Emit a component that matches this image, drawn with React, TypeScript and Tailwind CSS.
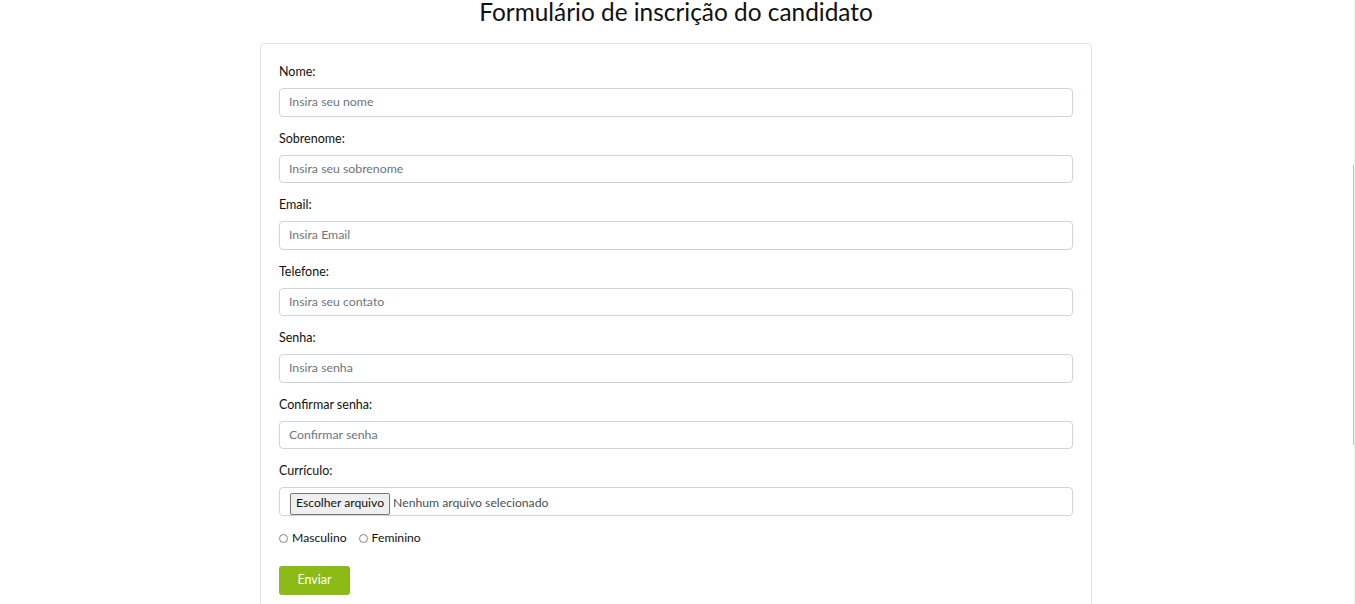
import React from "react";

const fields = [
  { label: "Nome:", ph: "Insira seu nome" },
  { label: "Sobrenome:", ph: "Insira seu sobrenome" },
  { label: "Email:", ph: "Insira Email" },
  { label: "Telefone:", ph: "Insira seu contato" },
  { label: "Senha:", ph: "Insira senha" },
  { label: "Confirmar senha:", ph: "Confirmar senha" },
];

export default function App() {
  return (
    <div
      className="relative w-[1352px] bg-white text-[#212529]"
      style={{ fontFamily: "Lato, 'Noto Sans', sans-serif" }}
    >
      <h1 className="text-center text-[24.4px] leading-[22px] pt-[1px] font-normal text-[#111] mb-[20px]">
        Formulário de inscrição do candidato
      </h1>
      <div className="mx-auto w-[832px] h-[580px] border border-[#e3e3e3] rounded-[4px] p-[18px]">
        {fields.map((f) => (
          <div key={f.label} className="mb-[12px]">
            <div className="text-[12.5px] leading-[19.5px] mb-[6.5px] text-[#111]">{f.label}</div>
            <div className="h-[28.5px] border border-[#ced4da] rounded-[4px] px-[9px] flex items-center text-[12.3px] text-[#6c757d]">
              {f.ph}
            </div>
          </div>
        ))}
        <div className="mb-[12px]">
          <div className="text-[12.5px] leading-[19.5px] mb-[6.5px] text-[#111]">Currículo:</div>
          <div className="h-[29px] border border-[#ced4da] rounded-[4px] px-[10px] flex items-center text-[12.2px] text-[#495057]">
            <span className="h-[22px] px-[5px] flex items-center bg-[#efefef] border border-[#767676] rounded-[2px] text-[#111] mr-[3px] mt-[4px]">
              Escolher arquivo
            </span>
            <span className="mt-[4px]">Nenhum arquivo selecionado</span>
          </div>
        </div>
        <div className="flex items-center text-[12.2px] text-[#111] h-[20px] mt-[10px]">
          <span className="w-[9px] h-[9px] rounded-full border border-[#858585] mr-[4px]" />
          <span className="mr-[12px]">Masculino</span>
          <span className="w-[9px] h-[9px] rounded-full border border-[#858585] mr-[4px]" />
          <span>Feminino</span>
        </div>
        <button className="mt-[18px] w-[71px] h-[29px] rounded-[3px] bg-[#8cbb15] text-white text-[12.5px]">
          Enviar
        </button>
      </div>
      <div className="fixed right-0 top-0 h-[604px] w-[1px] bg-[#f1f1f1]" />
      <div className="fixed right-[1px] top-[165px] h-[280px] w-[1px] bg-[#c1c1c1]" />
    </div>
  );
}
